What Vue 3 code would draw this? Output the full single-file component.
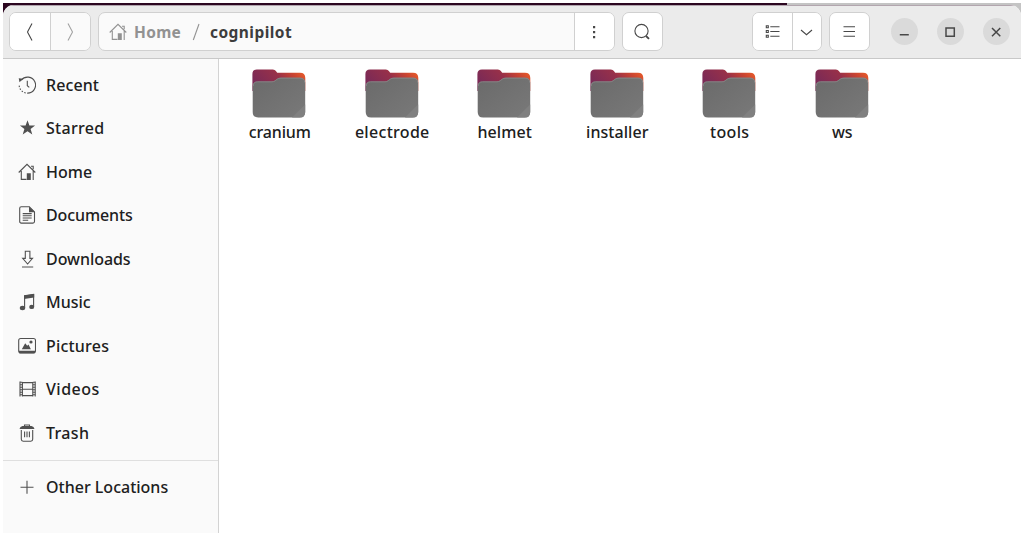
<script setup>
const places = [
  { name: 'Recent', icon: 'recent', ls: '0.1px' },
  { name: 'Starred', icon: 'star', ls: '0.3px' },
  { name: 'Home', icon: 'home', ls: '0px' },
  { name: 'Documents', icon: 'doc', ls: '-0.1px' },
  { name: 'Downloads', icon: 'down', ls: '-0.05px' },
  { name: 'Music', icon: 'music', ls: '0px' },
  { name: 'Pictures', icon: 'pic', ls: '0.2px' },
  { name: 'Videos', icon: 'video', ls: '0.5px' },
  { name: 'Trash', icon: 'trash', ls: '0.35px' }
]
const folders = [
  { name: 'cranium', ls: '-0.15px' },
  { name: 'electrode', ls: '0.3px' },
  { name: 'helmet', ls: '0.1px' },
  { name: 'installer', ls: '0.05px' },
  { name: 'tools', ls: '0.3px' },
  { name: 'ws', ls: '0px' }
]
</script>

<template>
  <div class="screen">
    <div class="desktop"><i class="wall"></i></div>
    <div class="window">
      <header class="bar">
        <div class="group nav">
          <button class="cell back"><svg width="20" height="20" viewBox="0 0 20 20"><path d="M12 1.500 7.500 10 12 18.500" /></svg></button>
          <button class="cell fwd"><svg width="20" height="20" viewBox="0 0 20 20"><path d="M8 1.500 12.500 10 8 18.500" /></svg></button>
        </div>
        <div class="group path">
          <div class="crumbs">
            <svg class="crumb-icon" width="18" height="18" viewBox="0 0 18 18"><path d="M.7 9.500 9 1.300l8.300 8.200M3.300 8v8.400h5.200M15.200 8v8.900M13 3.300h2.200v3" /><path class="solid" d="M8.800 10.200h4V17h-4z" /></svg>
            <span class="crumb home">Home</span><span class="slash"><svg width="10" height="20" viewBox="0 0 10 20"><path d="M8 2 2.300 18" /></svg></span><span class="crumb here">cognipilot</span>
          </div>
          <button class="cell more"><svg width="20" height="20" viewBox="0 0 20 20"><path class="solid" d="M9 4h2.200v2.200H9zM9 9h2.200v2.200H9zM9 14h2.200v2.200H9z" /></svg></button>
        </div>
        <div class="group search">
          <button class="cell"><svg width="20" height="20" viewBox="0 0 20 20"><circle cx="9.500" cy="9" r="6.600" /><path class="thick" d="m14 14 3 2.800" /></svg></button>
        </div>
        <div class="group view">
          <button class="cell list"><svg width="20" height="20" viewBox="0 0 20 20"><path d="M8.300 4.700H17.500M8.300 9.500H17.500M8.300 14.300H17.500" /><path d="M4.300 3.700h2v2h-2zM4.300 8.500h2v2h-2zM4.300 13.300h2v2h-2z" /></svg></button>
          <button class="cell drop"><svg width="20" height="20" viewBox="0 0 20 20"><path d="m5 8 5.500 4.700L16 8" /></svg></button>
        </div>
        <div class="group menu">
          <button class="cell"><svg width="20" height="20" viewBox="0 0 20 20"><path d="M4.500 4.700h11.500M4.500 9.500h11.500M4.500 14.300h11.500" /></svg></button>
        </div>
        <button class="ctl"><svg width="20" height="20" viewBox="0 0 20 20"><path class="mid" d="M5.800 12.700h9" /></svg></button>
        <button class="ctl"><svg width="20" height="20" viewBox="0 0 20 20"><path class="mid" d="M6 5.900h8.300v8.300H6z" /></svg></button>
        <button class="ctl"><svg width="20" height="20" viewBox="0 0 20 20"><path class="mid" d="m6 6 8.300 8.300M14.300 6 6 14.300" /></svg></button>
      </header>
      <div class="body">
        <nav class="side">
          <div v-for="p in places" :key="p.name" class="row">
            <svg width="18" height="18" viewBox="0 0 18 18">
              <template v-if="p.icon === 'recent'">
                <path d="M3.300 4.100a8 8 0 1 1 5.900 13M9.300 4.800v4.900l2 1.700" /><path class="solid" d="M.7 2.200 5.200 2.700 1.500 6.300z" /><path class="dash" d="M1.200 9.600a8 8 0 0 0 8 7.500" />
              </template>
              <path v-else-if="p.icon === 'star'" class="solid" d="m9.500 1.200 1.900 5.300h5.700l-4.500 3.500 1.700 5.600-4.800-3.400-4.800 3.400L6.400 10 1.900 6.500h5.700z" />
              <template v-else-if="p.icon === 'home'">
                <path d="M.7 9.500 9 1.300l8.300 8.200M3.300 8v8.400h5.200M15.200 8v8.900M13 3.300h2.200v3" /><path class="solid" d="M8.800 10.200h4V17h-4z" />
              </template>
              <template v-else-if="p.icon === 'doc'">
                <path d="M3.300.7h8l5.200 5.200v9.600q0 1.600-1.600 1.600H3.300q-1.600 0-1.600-1.600V2.300Q1.700.7 3.300.7z" /><path class="solid" d="M11 .5 17 6.300h-6z" /><path d="M4.700 7.600h9M4.700 9.800h9M4.700 12h9M4.700 14.200h5.500" />
              </template>
              <path v-else-if="p.icon === 'down'" d="M7.300 1.200h4.600v7.200h2.600l-4.900 5.600-4.900-5.600h2.600zM4 17h11.200" />
              <template v-else-if="p.icon === 'music'">
                <path d="M6.600 15V2.800l9-1.300v12.500" /><path class="solid" d="M6 2.500 16.200 1v3.400L6 5.900z" /><ellipse class="solid" cx="4.500" cy="15" rx="2.700" ry="2.200" /><ellipse class="solid" cx="13.700" cy="13.900" rx="2.500" ry="2.200" />
              </template>
              <template v-else-if="p.icon === 'pic'">
                <rect x=".7" y="1.500" width="16.800" height="14.200" rx="2" /><path class="solid" d="M.8 13.800h16.600v1.200q0 1.500-1.500 1.500H2.300q-1.500 0-1.500-1.500zM3.800 12.200l3.400-5.900 2 2.500 1.300-1.300 2.400 4.700z" /><circle class="solid" cx="13" cy="5" r="1.600" />
              </template>
              <template v-else-if="p.icon === 'video'">
                <path d="M4.400 2v14.500M14.800 2v14.500M4.400 2.600h10.400M4.400 9.300h10.400M4.400 15.600h10.400" /><path d="M2 1.500v15M17.200 1.500v15" /><path class="perf" d="M3.200 1.800v15M16 1.800v15" />
              </template>
              <template v-else>
                <path d="M3.300 6v9.300q0 1.900 1.900 1.900h7.600q1.900 0 1.900-1.900V6M6.500 2.500V1h5v1.500M6.600 7.500v5.700M9 7.500v5.700M11.400 7.500v5.700" /><path class="solid" d="M4.500 2h9q2.500.5 3 3h-15q.5-2.500 3-3z" />
              </template>
            </svg>
            <span :style="{ letterSpacing: p.ls }">{{ p.name }}</span>
          </div>
          <div class="rule"></div>
          <div class="row">
            <svg width="18" height="18" viewBox="0 0 18 18"><path d="M2.500 9.300h13M9 2.800v13" /></svg>
            <span>Other Locations</span>
          </div>
        </nav>
        <main class="files">
          <div v-for="f in folders" :key="f.name" class="file">
            <svg class="folder" width="54" height="50" viewBox="0 0 54 50">
              <defs>
                <linearGradient id="tab" x1="0" y1=".4" x2="1" y2="0"><stop offset="0" stop-color="#7b2a56" /><stop offset=".45" stop-color="#96304a" /><stop offset=".72" stop-color="#c94432" /><stop offset="1" stop-color="#f26427" /></linearGradient>
                <linearGradient id="front" x1="0" y1="0" x2="1" y2="1"><stop offset="0" stop-color="#6a6a6a" /><stop offset="1" stop-color="#797979" /></linearGradient>
              </defs>
              <path fill="url(#tab)" stroke="none" d="M.4 22V5q0-4.500 4.500-4.500h16q2 0 3 1.500l1.300 1.700H48q5.300 0 5.300 5.300v13z" />
              <path fill="url(#front)" stroke="none" d="M.7 17.500q0-5 5-5H20q2 0 3.300-1.200l2-1.500Q26.500 8.800 29 8.800h19q5.200 0 5.200 5V43q0 5.500-5.500 5.500H6.200q-5.500 0-5.500-5.500z" />
              <path class="shine" d="M1.200 17q0-4.200 4.400-4.200H20q2 0 3.300-1.200l2-1.500Q26.500 9.100 29 9.100h19q4.700 0 4.700 4.500" />
              <path fill="#808080" stroke="none" d="M40 48.500 53.200 35.500V43q0 5.500-5.500 5.500z" />
            </svg>
            <span :style="{ letterSpacing: f.ls }">{{ f.name }}</span>
          </div>
        </main>
      </div>
    </div>
  </div>
</template>

<style>
body { background: #fff; }
</style>

<style scoped>
.screen { width: 1025px; height: 533px; box-sizing: border-box; padding: 3px 4px 0 3px; background: #fff; overflow: hidden; position: relative; font-family: "Noto Sans", "Open Sans", sans-serif; color: #202020; font-size: 16px; font-weight: 500; }
.desktop { position: absolute; left: 3px; top: 3px; width: 1018px; height: 14px; background: #c4c4c4; }
.wall { display: block; width: 784px; height: 14px; background: #2c0720; }
.window { position: relative; margin-top: 2px; height: 528px; border-radius: 11px 11px 0 0; overflow: hidden; background: #fff; }
.bar { display: flex; align-items: center; box-sizing: border-box; height: 54px; padding-left: 6px; background: #ebebeb; border-bottom: 1px solid #c8c8c8; box-shadow: inset 0 1px #b2a5ae; }
.group { display: flex; box-sizing: border-box; height: 39px; border: 1px solid #d0d0d0; border-radius: 7px; background: #fff; overflow: hidden; margin-right: 7px; flex: none; }
.nav { width: 82px; }
.path { width: 517px; background: #fafafa; }
.search { width: 41px; margin-right: 89px; }
.view { width: 70px; }
.menu { width: 41px; margin-right: 20.500px; }
button { padding: 0; border: 0; background: transparent; display: flex; align-items: center; justify-content: center; }
.cell { flex: 1; background: #fff; color: #484848; }
.cell svg { margin-right: 2px; }
.nav .cell svg { margin-right: 0; }
.cell + .cell, .crumbs + .cell { border-left: 1px solid #d0d0d0; }
.nav .fwd { background: #fafafa; color: #a2a2a2; }
.list { flex: 0 0 39px; }
.more { flex: 0 0 40px; }
.crumbs { flex: 1; display: flex; align-items: center; padding-left: 10px; font-weight: 700; font-size: 15.500px; }
.crumb-icon { color: #929292; margin-right: 7px; }
.crumb { width: 48px; color: #929292; letter-spacing: .3px; }
.here { width: 85px; color: #3d3d3d; letter-spacing: .45px; }
.slash { width: 28px; display: flex; justify-content: center; color: #929292; }
.ctl { width: 27px; height: 27px; border-radius: 50%; background: #dadada; color: #484848; margin-right: 19px; flex: none; }
.ctl svg { margin-right: 1px; }
svg { fill: none; stroke: currentColor; stroke-width: 1.100; flex: none; display: block; }
.mid { stroke-width: 1.500; }
.thick { stroke-width: 1.800; }
.solid { fill: currentColor; stroke: none; }
.dash { stroke-dasharray: 1.500 1.500; }
.perf { stroke-dasharray: 1 1.500; stroke-width: 2.400; }
.body { display: flex; height: 474px; }
.side { width: 216px; box-sizing: border-box; background: #fafafa; border-right: 1px solid #d3d3d3; padding-top: 4px; flex: none; }
.row { display: flex; align-items: center; height: 43.500px; padding-left: 15px; white-space: nowrap; }
.row svg { color: #505050; margin-right: 10px; }
.row span { line-height: 22px; }
.rule { height: 1px; background: #dfdfdf; margin: 5px 0 4.500px; }
.files { display: flex; padding: 10px 0 0 4px; }
.file { width: 112.500px; display: flex; flex-direction: column; align-items: center; }
.folder { margin-bottom: 2px; }
.folder .shine { stroke: #8b8b8b; stroke-width: .8; }
.file span { line-height: 22px; padding-left: 1px; }
</style>
